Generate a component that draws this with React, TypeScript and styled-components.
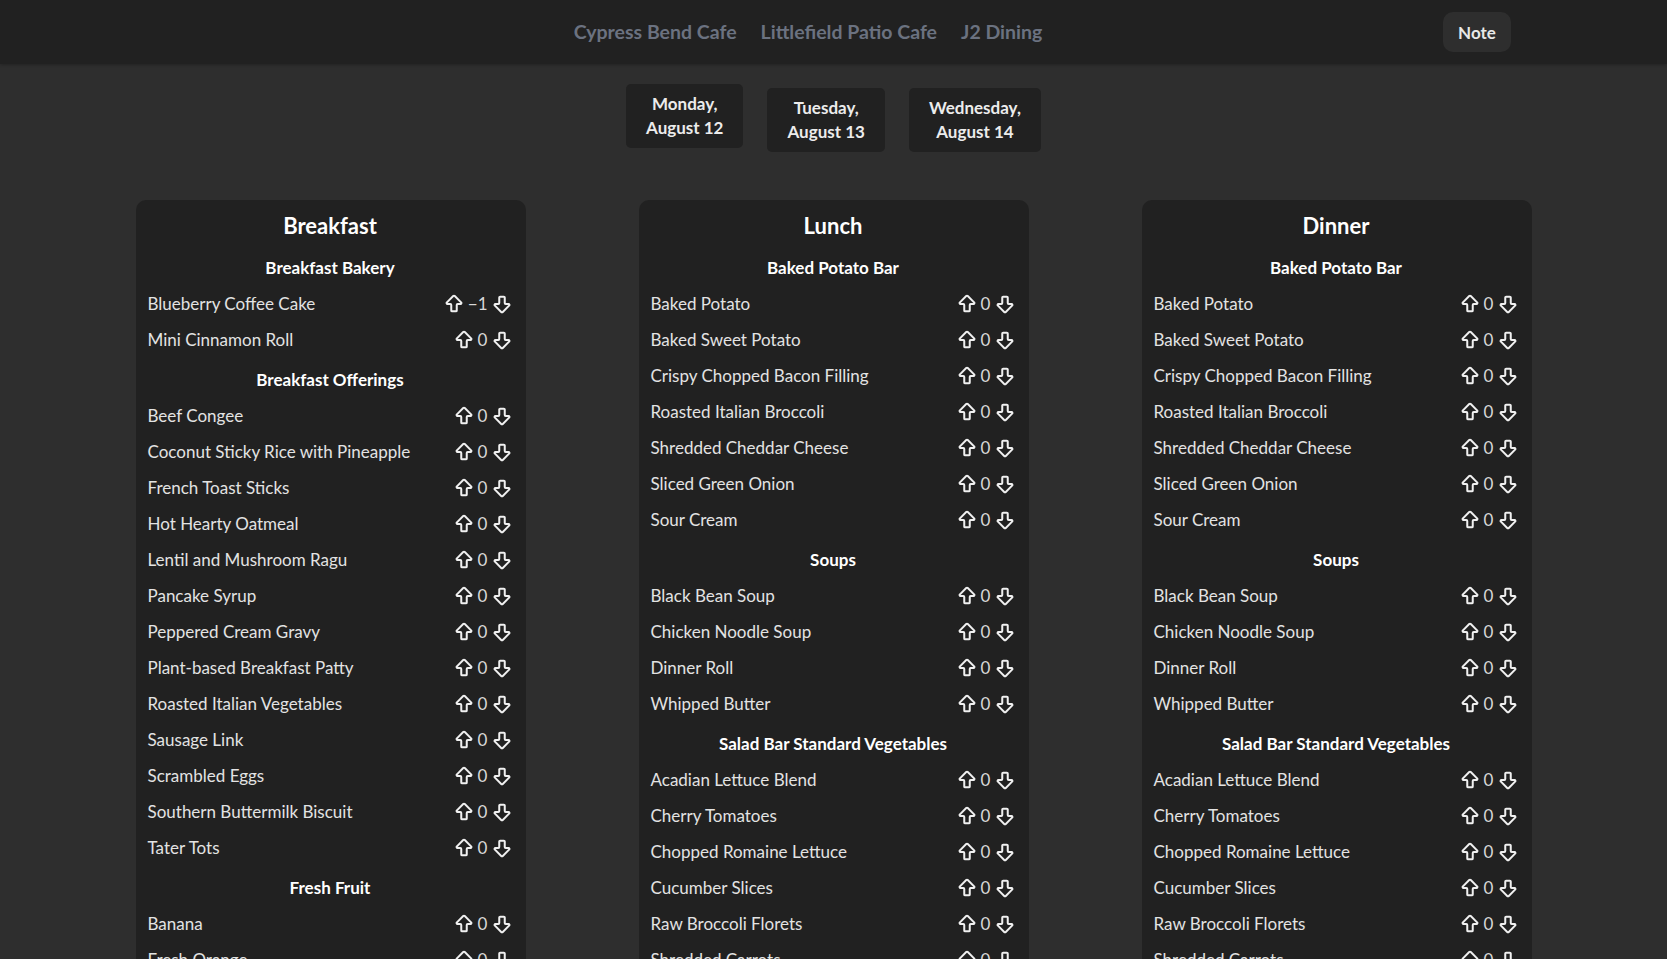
import React from "react";
import styled, { createGlobalStyle } from "styled-components";
import { ArrowBigUp, ArrowBigDown } from "lucide-react";

const GlobalStyle = createGlobalStyle`
  html, body {
    margin: 0;
    padding: 0;
    background: #2e2e2e;
    font-family: Lato, "Noto Sans", "DejaVu Sans", sans-serif;
    color: #e5e5e5;
  }
  * { box-sizing: border-box; }
`;

const Header = styled.header`
  height: 64px;
  background: #212121;
  display: flex;
  align-items: center;
  gap: 16px;
  padding: 0 156px 0 189px;
  box-shadow: 0 1px 3px rgba(0, 0, 0, 0.25);
`;

const Nav = styled.nav`
  flex: 1;
  display: flex;
  justify-content: center;
  gap: 24px;
`;

const NavLink = styled.a`
  font-size: 19.5px;
  font-weight: 700;
  color: #6b7280;
  text-decoration: none;
  line-height: 26px;
`;

const NoteButton = styled.button`
  height: 40px;
  width: 68px;
  border: none;
  border-radius: 10px;
  background: #2e2e2e;
  color: #e8e8e8;
  font-family: inherit;
  font-size: 17px;
  font-weight: 700;
`;

const Days = styled.div`
  display: flex;
  justify-content: center;
  gap: 24px;
  margin-top: 24px;
`;

const DayButton = styled.button<{ $active?: boolean }>`
  background: #212121;
  border: none;
  border-radius: 5px;
  color: #ececec;
  font-family: inherit;
  font-size: 17px;
  font-weight: 700;
  line-height: 24px;
  padding: 8px 20px;
  transform: translateY(${(p) => (p.$active ? "-4px" : "0")});
`;

const Columns = styled.main`
  display: flex;
  justify-content: center;
  gap: 113px;
  margin-top: 48px;
  padding-bottom: 40px;
`;

const Card = styled.section`
  width: 390px;
  background: #212121;
  border-radius: 10px;
  padding: 12px 13px 12px 12px;
  align-self: flex-start;
  display: flex;
  flex-direction: column;
`;

const MealTitle = styled.h2`
  margin: 0 0 6px;
  text-align: center;
  font-size: 22px;
  line-height: 28px;
  font-weight: 700;
  color: #ffffff;
`;

const Station = styled.div`
  display: flex;
  flex-direction: column;
`;

const StationTitle = styled.h3`
  margin: 10px 0 6px;
  text-align: center;
  font-size: 17px;
  line-height: 24px;
  font-weight: 700;
  color: #ffffff;
`;

const Row = styled.div`
  height: 36px;
  display: flex;
  align-items: center;
  justify-content: space-between;
`;

const ItemName = styled.span`
  font-size: 17px;
  line-height: 24px;
  color: #e3e3e3;
`;

const Votes = styled.div`
  display: flex;
  align-items: center;
  gap: 3px;
  color: #f0f0f0;
`;

const Count = styled.span`
  font-size: 17px;
  line-height: 24px;
  color: #d8d8d8;
  min-width: 10px;
  text-align: center;
`;

type StationData = { name: string; items: [string, number][] };
type Meal = { title: string; stations: StationData[] };

const z = (names: string[]): [string, number][] => names.map((n) => [n, 0]);

const lunchStations: StationData[] = [
  {
    name: "Baked Potato Bar",
    items: z([
      "Baked Potato",
      "Baked Sweet Potato",
      "Crispy Chopped Bacon Filling",
      "Roasted Italian Broccoli",
      "Shredded Cheddar Cheese",
      "Sliced Green Onion",
      "Sour Cream",
    ]),
  },
  {
    name: "Soups",
    items: z(["Black Bean Soup", "Chicken Noodle Soup", "Dinner Roll", "Whipped Butter"]),
  },
  {
    name: "Salad Bar Standard Vegetables",
    items: z([
      "Acadian Lettuce Blend",
      "Cherry Tomatoes",
      "Chopped Romaine Lettuce",
      "Cucumber Slices",
      "Raw Broccoli Florets",
      "Shredded Carrots",
      "Sliced Red Onion",
      "Spinach",
    ]),
  },
];

const meals: Meal[] = [
  {
    title: "Breakfast",
    stations: [
      {
        name: "Breakfast Bakery",
        items: [
          ["Blueberry Coffee Cake", -1],
          ["Mini Cinnamon Roll", 0],
        ],
      },
      {
        name: "Breakfast Offerings",
        items: z([
          "Beef Congee",
          "Coconut Sticky Rice with Pineapple",
          "French Toast Sticks",
          "Hot Hearty Oatmeal",
          "Lentil and Mushroom Ragu",
          "Pancake Syrup",
          "Peppered Cream Gravy",
          "Plant-based Breakfast Patty",
          "Roasted Italian Vegetables",
          "Sausage Link",
          "Scrambled Eggs",
          "Southern Buttermilk Biscuit",
          "Tater Tots",
        ]),
      },
      {
        name: "Fresh Fruit",
        items: z(["Banana", "Fresh Orange", "Granny Smith Apple", "Red Delicious Apple"]),
      },
    ],
  },
  { title: "Lunch", stations: lunchStations },
  { title: "Dinner", stations: lunchStations },
];

const formatCount = (n: number) => (n < 0 ? `\u2212${Math.abs(n)}` : String(n));

export default function App() {
  return (
    <>
      <GlobalStyle />
      <Header>
        <Nav>
          <NavLink>Cypress Bend Cafe</NavLink>
          <NavLink>Littlefield Patio Cafe</NavLink>
          <NavLink>J2 Dining</NavLink>
        </Nav>
        <NoteButton>Note</NoteButton>
      </Header>
      <Days>
        <DayButton $active>
          Monday,
          <br />
          August 12
        </DayButton>
        <DayButton>
          Tuesday,
          <br />
          August 13
        </DayButton>
        <DayButton>
          Wednesday,
          <br />
          August 14
        </DayButton>
      </Days>
      <Columns>
        {meals.map((meal) => (
          <Card key={meal.title}>
            <MealTitle>{meal.title}</MealTitle>
            {meal.stations.map((st) => (
              <Station key={st.name}>
                <StationTitle>{st.name}</StationTitle>
                {st.items.map(([name, count]) => (
                  <Row key={name}>
                    <ItemName>{name}</ItemName>
                    <Votes>
                      <ArrowBigUp size={22} strokeWidth={2.2} />
                      <Count>{formatCount(count)}</Count>
                      <ArrowBigDown size={22} strokeWidth={2.2} />
                    </Votes>
                  </Row>
                ))}
              </Station>
            ))}
          </Card>
        ))}
      </Columns>
    </>
  );
}
